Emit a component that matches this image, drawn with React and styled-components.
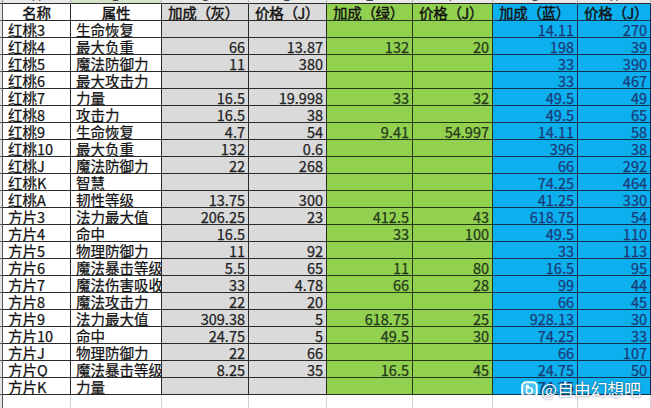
import React from 'react';
import styled, { createGlobalStyle } from 'styled-components';

const GlobalStyle = createGlobalStyle`
  html, body {
    margin: 0;
    padding: 0;
    background: #ffffff;
  }
  body {
    font-family: "Noto Sans CJK SC", "Noto Sans", sans-serif;
    overflow: hidden;
  }
`;

// colonnes : largeur, fond, encre, trait
const columns = [
  { w: 68, bg: '#ffffff', ink: '#141414', line: '#2a2a2a', head: '名称', letter: 'A' },
  { w: 91, bg: '#ffffff', ink: '#141414', line: '#2a2a2a', head: '属性', letter: 'B' },
  { w: 87, bg: '#dadada', ink: '#222222', line: '#2a2a2a', head: '加成（灰）', letter: 'C' },
  { w: 78, bg: '#dadada', ink: '#222222', line: '#2a2a2a', head: '价格（J）', letter: 'D' },
  { w: 86, bg: '#92d050', ink: '#22391a', line: '#243818', head: '加成（绿）', letter: 'E' },
  { w: 80, bg: '#92d050', ink: '#22391a', line: '#243818', head: '价格（J）', letter: 'F' },
  { w: 85, bg: '#0db0ee', ink: '#1b3a78', line: '#12314e', head: '加成（蓝）', letter: 'G' },
  { w: 73, bg: '#0db0ee', ink: '#1b3a78', line: '#12314e', head: '价格（J）', letter: 'H' },
];

const rows = [
  ['红桃3', '生命恢复', '', '', '', '', '14.11', '270'],
  ['红桃4', '最大负重', '66', '13.87', '132', '20', '198', '39'],
  ['红桃5', '魔法防御力', '11', '380', '', '', '33', '390'],
  ['红桃6', '最大攻击力', '', '', '', '', '33', '467'],
  ['红桃7', '力量', '16.5', '19.998', '33', '32', '49.5', '49'],
  ['红桃8', '攻击力', '16.5', '38', '', '', '49.5', '65'],
  ['红桃9', '生命恢复', '4.7', '54', '9.41', '54.997', '14.11', '58'],
  ['红桃10', '最大负重', '132', '0.6', '', '', '396', '38'],
  ['红桃J', '魔法防御力', '22', '268', '', '', '66', '292'],
  ['红桃K', '智慧', '', '', '', '', '74.25', '464'],
  ['红桃A', '韧性等级', '13.75', '300', '', '', '41.25', '330'],
  ['方片3', '法力最大值', '206.25', '23', '412.5', '43', '618.75', '54'],
  ['方片4', '命中', '16.5', '', '33', '100', '49.5', '110'],
  ['方片5', '物理防御力', '11', '92', '', '', '33', '113'],
  ['方片6', '魔法暴击等级', '5.5', '65', '11', '80', '16.5', '95'],
  ['方片7', '魔法伤害吸收', '33', '4.78', '66', '28', '99', '44'],
  ['方片8', '魔法攻击力', '22', '20', '', '', '66', '45'],
  ['方片9', '法力最大值', '309.38', '5', '618.75', '25', '928.13', '30'],
  ['方片10', '命中', '24.75', '5', '49.5', '30', '74.25', '33'],
  ['方片J', '物理防御力', '22', '66', '', '', '66', '107'],
  ['方片Q', '魔法暴击等级', '8.25', '35', '16.5', '45', '24.75', '50'],
  ['方片K', '力量', '', '', '', '', '74.25', ''],
];

const Page = styled.div`
  position: relative;
  width: 651px;
  height: 408px;
  overflow: hidden;
  background: #ffffff;
`;

const Sheet = styled.div`
  display: grid;
  grid-template-columns: 3px ${columns.map((c) => `${c.w}px`).join(' ')};
  grid-template-rows: 4px repeat(23, 17px) 20px;
`;

const Corner = styled.div`
  background: #e4e4e4;
  border-right: 1px solid #9a9a9a;
  border-bottom: 1px solid #333;
`;

const Letter = styled.div`
  background: ${(p) => (p.$active ? '#d6e3cb' : '#e9e9e9')};
  border-right: 1px solid #b8b8b8;
  border-bottom: 1px solid #2a2a2a;
  overflow: hidden;
  text-align: center;
  font-family: "Liberation Sans", sans-serif;
  font-size: 12px;
  line-height: 12px;
  color: #444;

  span {
    display: block;
    margin-top: -9px;
  }
`;

const RowNum = styled.div`
  background: #e4e4e4;
  border-right: 1px solid #555;
  border-bottom: 1px solid ${(p) => (p.$last ? '#d0d0d0' : '#555')};
`;

const Cell = styled.div`
  box-sizing: border-box;
  height: 17px;
  overflow: hidden;
  white-space: nowrap;
  background: ${(p) => p.$bg};
  color: ${(p) => p.$ink};
  border-right: 1px solid ${(p) => p.$line};
  border-bottom: 1px solid ${(p) => p.$line};
  font-size: 14.5px;
  line-height: 17px;
  -webkit-text-stroke: 0.25px currentColor;
  text-align: ${(p) => (p.$num ? 'right' : 'left')};
  padding: ${(p) => (p.$num ? '0 3px 0 0' : '0 0 0 5px')};
`;

const HeadCell = styled(Cell)`
  color: #101010;
  text-align: ${(p) => (p.$center ? 'center' : 'left')};
  padding: ${(p) => (p.$center ? '0' : '0 0 0 6px')};
  letter-spacing: -0.3px;
  -webkit-text-stroke: 0.4px currentColor;
`;

const EmptyCell = styled.div`
  background: #ffffff;
  border-right: 1px solid #d4d4d4;
`;

const Watermark = styled.div`
  position: absolute;
  left: 521px;
  top: 380px;
  display: flex;
  align-items: center;
  gap: 3px;
  color: #ffffff;
  font-size: 17px;
  line-height: 18px;
  letter-spacing: -0.2px;
  text-shadow: 0 0 2px rgba(20, 40, 70, 0.8);
`;

const BubbleIcon = () => (
  <svg width="17" height="17" viewBox="0 0 17 17">
    <rect x="1.2" y="1.2" width="14.6" height="14.6" rx="4" fill="rgba(255,255,255,0.25)" stroke="#ffffff" strokeWidth="2" />
    <path d="M5.5 4.5 L7 4.5 L7 7 C9.5 6.3 11.5 7.5 11.5 9.5 C11.5 11.6 9.8 12.6 8 12.6 C6.5 12.6 5.5 11.8 5.5 10.6 Z" fill="none" stroke="#ffffff" strokeWidth="1.6" strokeLinejoin="round" />
  </svg>
);

export default function App() {
  return (
    <Page>
      <GlobalStyle />
      <Sheet>
        <Corner />
        {columns.map((c) => (
          <Letter key={c.letter} $active={c.letter === 'B'}>
            <span>{c.letter}</span>
          </Letter>
        ))}

        <RowNum />
        {columns.map((c, i) => (
          <HeadCell key={c.letter} $bg={c.bg} $ink={c.ink} $line={c.line} $center={i < 2}>
            {c.head}
          </HeadCell>
        ))}

        {rows.map((row) => (
          <React.Fragment key={row[0]}>
            <RowNum />
            {row.map((v, i) => (
              <Cell
                key={i}
                $bg={columns[i].bg}
                $ink={columns[i].ink}
                $line={columns[i].line}
                $num={i >= 2}
              >
                {v}
              </Cell>
            ))}
          </React.Fragment>
        ))}

        <RowNum $last />
        {columns.map((c) => (
          <EmptyCell key={c.letter} />
        ))}
      </Sheet>

      <Watermark>
        <BubbleIcon />
        <span>@自由幻想吧</span>
      </Watermark>
    </Page>
  );
}
